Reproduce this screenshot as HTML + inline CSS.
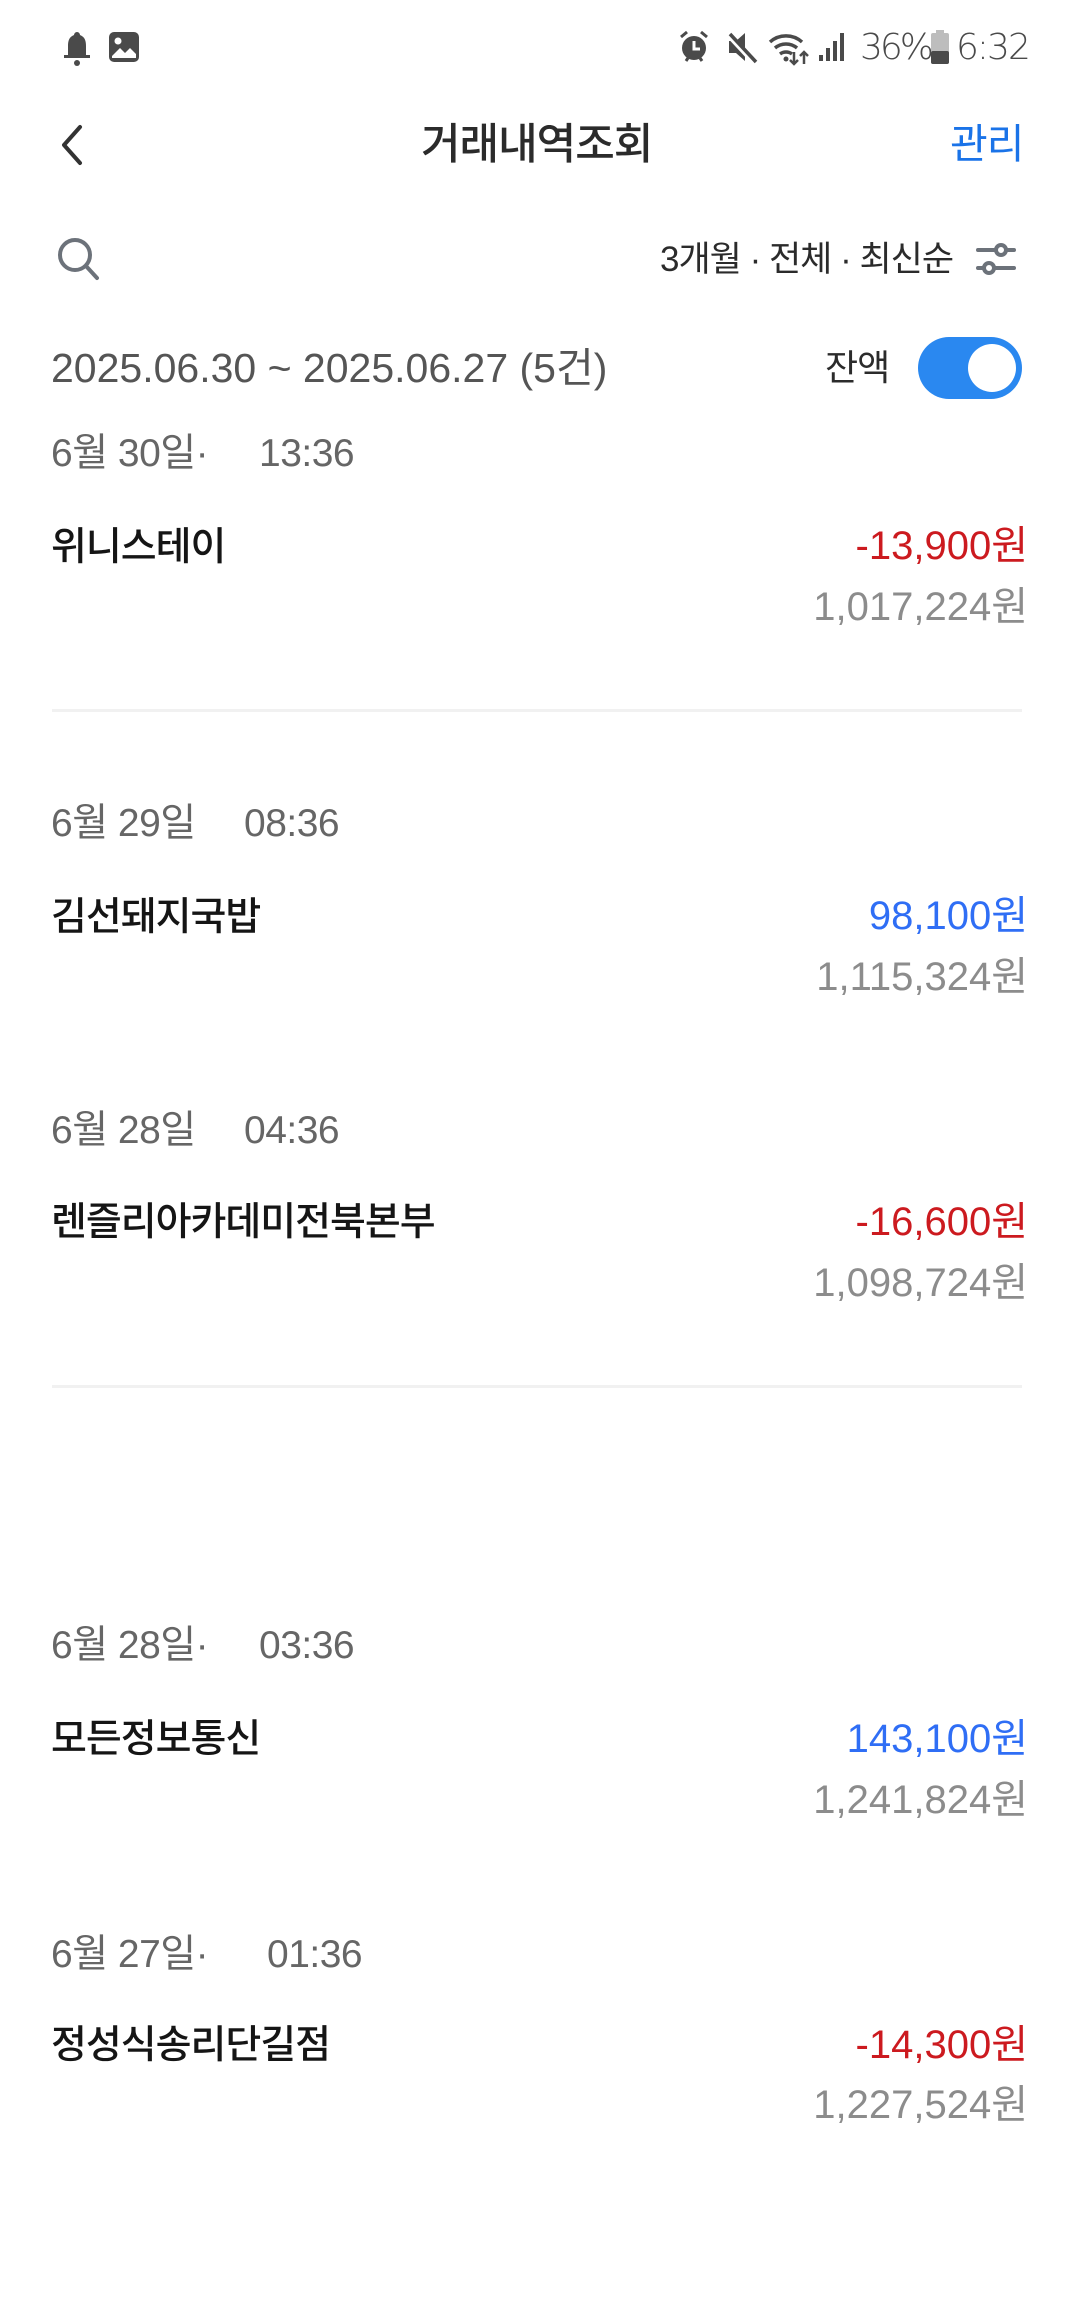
<!DOCTYPE html>
<html><head><meta charset="utf-8">
<style>
*{margin:0;padding:0;box-sizing:border-box}
body{width:1080px;height:2316px;background:#fff;position:relative;overflow:hidden;font-family:"Liberation Sans","Noto Sans CJK KR",sans-serif}
.a{position:absolute;white-space:nowrap;line-height:1}
.date{font-size:39px;color:#666;left:51px;letter-spacing:-0.5px}
.name{font-size:39px;color:#151515;left:51px;font-weight:500;letter-spacing:-1px}
.amt{font-size:40px;right:52px;text-align:right}
.bal{font-size:40px;right:52px;color:#8c8c8c;text-align:right}
.red{color:#cc1a1f}.blue{color:#2f6ef5}
.div{position:absolute;left:52px;width:970px;height:3px;background:#f1f1f1}
</style></head><body>
<!-- status bar -->
<svg class="a" style="left:60px;top:30px" width="34" height="36" viewBox="0 0 34 36"><path d="M17 2c-2 0-3 2-3 3-5 2-6 6-6 11v9H4v3h26v-3h-4v-9c0-5-1-9-6-11 0-1-1-3-3-3z" fill="#4a4a4a"/><circle cx="17" cy="33" r="3" fill="#4a4a4a"/></svg>
<svg class="a" style="left:108px;top:31px" width="32" height="32" viewBox="0 0 32 32"><rect x="1" y="1" width="30" height="30" rx="5" fill="#4a4a4a"/><circle cx="10" cy="10" r="3.5" fill="#fff"/><path d="M4 25l8-8 5 5 5-5 6 6v4H4z" fill="#fff"/></svg>
<svg class="a" style="left:678px;top:30px" width="32" height="34" viewBox="0 0 32 34"><circle cx="16" cy="18" r="12" fill="#4a4a4a"/><path d="M3 7l6-5M29 7l-6-5M8 31l2-3M24 31l-2-3" stroke="#4a4a4a" stroke-width="3"/><path d="M16 11v8h6" stroke="#fff" stroke-width="3" fill="none"/></svg>
<svg class="a" style="left:726px;top:30px" width="32" height="34" viewBox="0 0 32 34"><path d="M3 11h7l9-8v28l-9-8H3z" fill="#4a4a4a"/><path d="M2 4l26 28" stroke="#fff" stroke-width="6"/><path d="M4 4l26 28" stroke="#4a4a4a" stroke-width="3.5"/></svg>
<svg class="a" style="left:768px;top:30px" width="44" height="36" viewBox="0 0 44 36"><path d="M2 12a24 24 0 0 1 32 0M7 18a17 17 0 0 1 22 0M12 24a10 10 0 0 1 12 0" stroke="#4a4a4a" stroke-width="3.5" fill="none"/><circle cx="18" cy="29" r="2.5" fill="#4a4a4a"/><path d="M26 22v12M22 30l4 4 4-4M36 34V22M32 26l4-4 4 4" stroke="#4a4a4a" stroke-width="2.5" fill="none"/></svg>
<svg class="a" style="left:818px;top:32px" width="28" height="30" viewBox="0 0 28 30"><rect x="1" y="23" width="4" height="6" fill="#4a4a4a"/><rect x="8" y="16" width="4" height="13" fill="#4a4a4a"/><rect x="15" y="9" width="4" height="20" fill="#4a4a4a"/><rect x="22" y="1" width="4" height="28" fill="#4a4a4a"/></svg>
<div class="a" style="left:860px;top:30px;font-size:36px;color:#4a4a4a;font-family:'DejaVu Sans',sans-serif;font-weight:200;letter-spacing:-3px">36%</div>
<svg class="a" style="left:930px;top:30px" width="20" height="34" viewBox="0 0 20 34"><rect x="6" y="0" width="8" height="4" fill="#bdbdbd"/><rect x="1" y="3" width="18" height="31" rx="2" fill="#bdbdbd"/><rect x="1" y="21" width="18" height="13" rx="2" fill="#4a4a4a"/></svg>
<div class="a" style="left:956px;top:30px;font-size:36px;color:#4a4a4a;font-family:'DejaVu Sans',sans-serif;font-weight:200;letter-spacing:-2px">6:32</div>

<!-- header -->
<svg class="a" style="left:56px;top:123px" width="30" height="44" viewBox="0 0 30 44"><path d="M24 4L8 22l16 18" stroke="#333" stroke-width="4" fill="none" stroke-linecap="round" stroke-linejoin="round"/></svg>
<div class="a" style="left:421px;top:124px;font-size:43px;color:#2b2b2b;font-weight:500;letter-spacing:-1px">거래내역조회</div>
<div class="a" style="left:950px;top:124px;font-size:41px;color:#1a73e8;letter-spacing:-1px">관리</div>

<!-- search/filter -->
<svg class="a" style="left:54px;top:234px" width="50" height="50" viewBox="0 0 50 50"><circle cx="21" cy="21" r="15" stroke="#6c727a" stroke-width="4" fill="none"/><path d="M32 32l11 12" stroke="#6c727a" stroke-width="4" stroke-linecap="round"/></svg>
<div class="a" style="left:660px;top:242px;font-size:35px;color:#2b2b2b;letter-spacing:-1px">3개월 · 전체 · 최신순</div>
<svg class="a" style="left:974px;top:238px" width="44" height="42" viewBox="0 0 44 42"><path d="M4 12h18M32 12h8M4 30h6M20 30h20" stroke="#6c727a" stroke-width="4" stroke-linecap="round"/><circle cx="27" cy="12" r="5" stroke="#6c727a" stroke-width="4" fill="#fff"/><circle cx="15" cy="30" r="5" stroke="#6c727a" stroke-width="4" fill="#fff"/></svg>

<!-- range + toggle -->
<div class="a" style="left:51px;top:348px;font-size:41px;color:#555;letter-spacing:0px">2025.06.30 ~ 2025.06.27 (5건)</div>
<div class="a" style="left:825px;top:350px;font-size:36px;color:#2b2b2b;letter-spacing:-1px">잔액</div>
<div class="a" style="left:918px;top:337px;width:104px;height:62px;border-radius:31px;background:#2a88f0"></div>
<div class="a" style="left:968px;top:344px;width:48px;height:48px;border-radius:50%;background:#fff"></div>

<!-- item 1 -->
<div class="a date" style="top:434px">6월 30일·</div>
<div class="a date" style="left:259px;top:434px">13:36</div>
<div class="a name" style="top:528px">위니스테이</div>
<div class="a amt red" style="top:526px">-13,900원</div>
<div class="a bal" style="top:587px">1,017,224원</div>
<div class="div" style="top:709px"></div>

<!-- item 2 -->
<div class="a date" style="top:804px">6월 29일</div>
<div class="a date" style="left:244px;top:804px">08:36</div>
<div class="a name" style="top:898px">김선돼지국밥</div>
<div class="a amt blue" style="top:896px">98,100원</div>
<div class="a bal" style="top:957px">1,115,324원</div>

<!-- item 3 -->
<div class="a date" style="top:1111px">6월 28일</div>
<div class="a date" style="left:244px;top:1111px">04:36</div>
<div class="a name" style="top:1203px">렌즐리아카데미전북본부</div>
<div class="a amt red" style="top:1202px">-16,600원</div>
<div class="a bal" style="top:1263px">1,098,724원</div>
<div class="div" style="top:1385px"></div>

<!-- item 4 -->
<div class="a date" style="top:1626px">6월 28일·</div>
<div class="a date" style="left:259px;top:1626px">03:36</div>
<div class="a name" style="top:1720px">모든정보통신</div>
<div class="a amt blue" style="top:1719px">143,100원</div>
<div class="a bal" style="top:1780px">1,241,824원</div>

<!-- item 5 -->
<div class="a date" style="top:1935px">6월 27일·</div>
<div class="a date" style="left:267px;top:1935px">01:36</div>
<div class="a name" style="top:2026px">정성식송리단길점</div>
<div class="a amt red" style="top:2025px">-14,300원</div>
<div class="a bal" style="top:2085px">1,227,524원</div>
</body></html>
